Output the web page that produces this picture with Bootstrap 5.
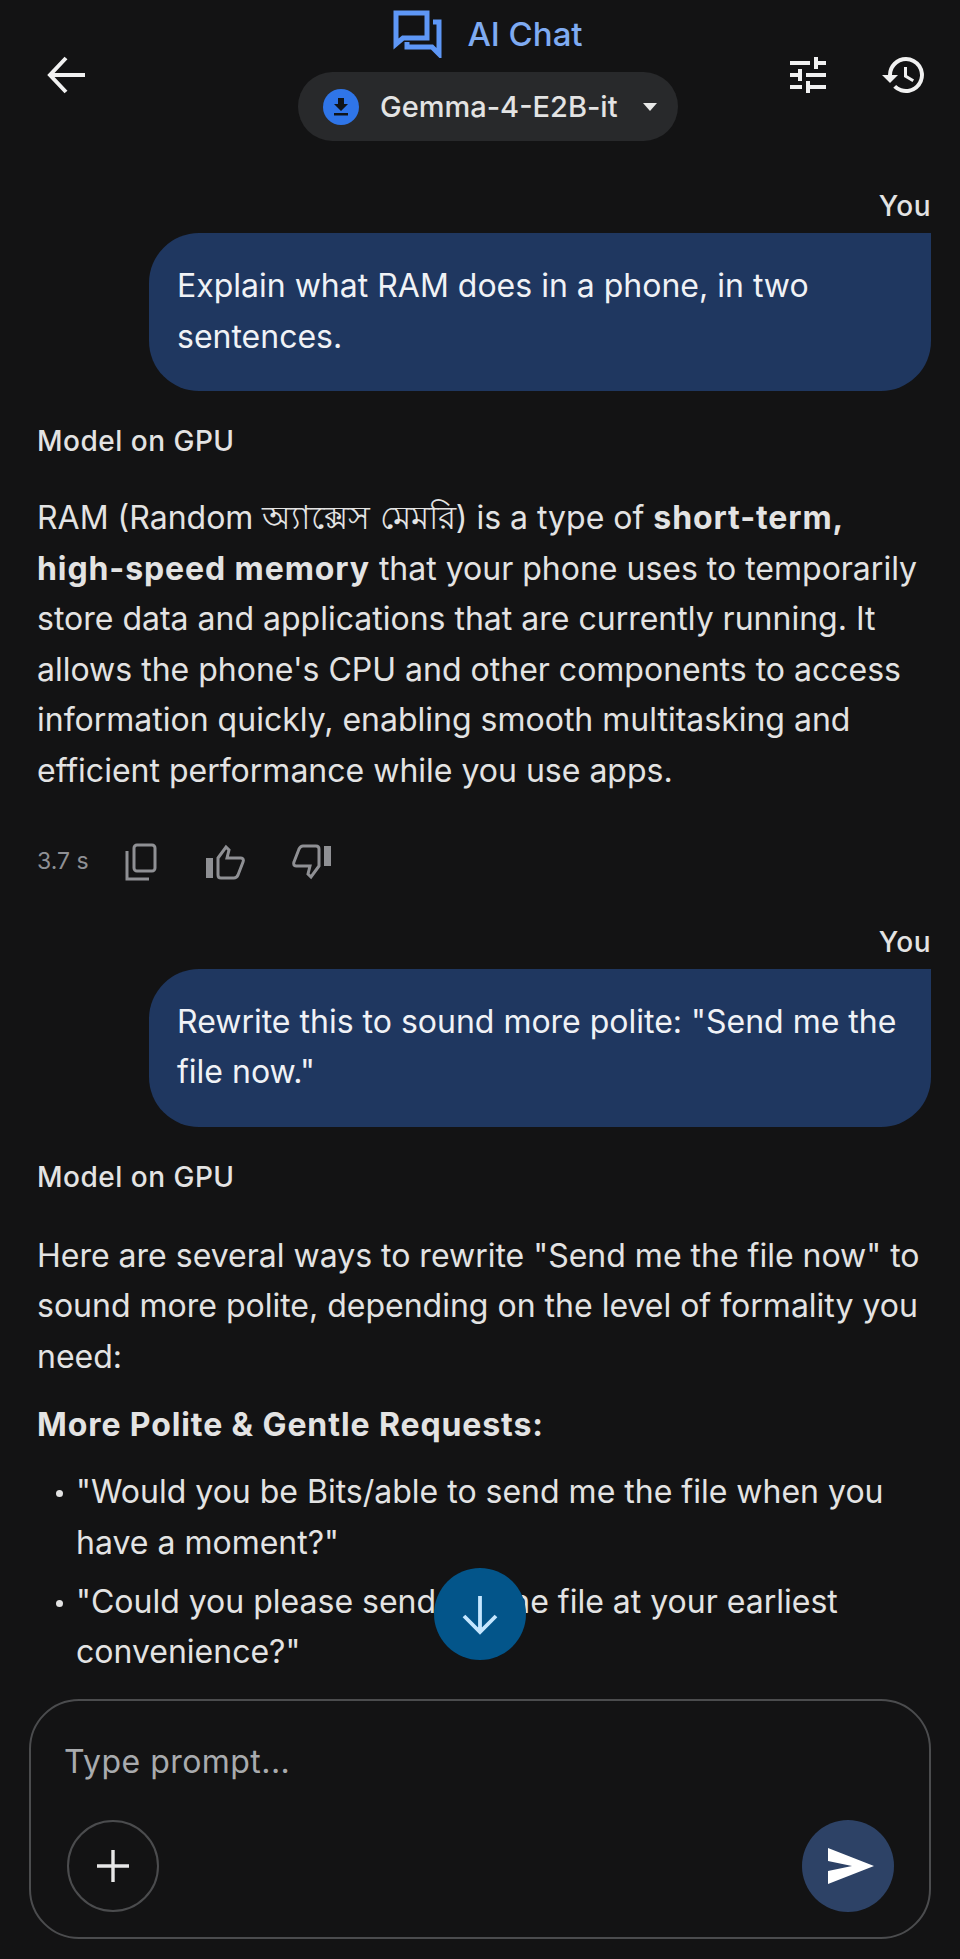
<!doctype html>
<html lang="en">
  <head>
    <meta charset="UTF-8" />
    <meta name="viewport" content="width=device-width, initial-scale=1.0" />
    <title>AI Chat</title>
    <link
      rel="stylesheet"
      href="https://cdn.jsdelivr.net/npm/bootstrap@5.3.0/dist/css/bootstrap.min.css"
    />
    <style>
      html, body { height: 1959px; overflow: hidden; }
      body {
        background: #131314;
        color: #e3e3e3;
        font-family: Inter, Roboto, "Noto Sans", sans-serif;
        font-size: 32px;
        line-height: 50.6px;
      }
      .app-shell { height: 1959px; width: 960px; }
      .top-bar { height: 153px; padding: 51px 32px 0 46px; }
      .top-actions { gap: 48px; }
      .top-center { top: 9px; left: 8px; width: 960px; }
      .app-title { color: #7fabf2; font-size: 33px; line-height: 50px; font-weight: 500; gap: 24px; }
      .model-chip {
        background: #28292b; height: 69px; width: 380px; border-radius: 35px;
        font-size: 29px; font-weight: 500; line-height: 1; padding: 0 20px 0 25px;
        margin-top: 13px;
      }
      .dl-dot { width: 36px; height: 36px; border-radius: 50%; background: #2f75e8; }
      .chip-label { margin-left: 21px; }
      .top-icon { width: 48px; height: 48px; }
      .back-icon { width: 40px; height: 48px; }
      .chat-scroll { height: 1546px; overflow: hidden; padding: 33px 29px 0 37px; }
      .who { font-size: 28px; font-weight: 500; line-height: 40px; letter-spacing: .5px; }
      .user-bubble {
        background: #1f3760; width: 782px; min-height: 158px;
        border-radius: 50px 0 50px 50px; padding: 28px 28px 26px;
        margin: 7px 0 30px auto; color: #f0f2f6;
      }
      .model-text { margin: 32px 0 0; }
      .model-text b, .sub-head { letter-spacing: .9px; }
      .model-text b { font-weight: 700; }
      .bn-text { font-size: 33.2px; line-height: 1; }
      .stat-row { height: 50px; margin: 40px 0 35px; color: #8f9094; font-size: 23px; }
      .stat-row svg { display: block; }
      .stat-copy { margin-left: 36px; }
      .stat-up { margin-left: 49px; }
      .stat-down { margin-left: 45px; }
      .later-answer { margin-top: 34px; }
      .sub-head { font-weight: 700; margin: 18px 0 0; line-height: 50px; }
      .bullets { list-style: none; margin: 17px 0 0; padding: 0 0 0 39px; }
      .bullets li { position: relative; margin-bottom: 8px; }
      .bullets li::before {
        content: ""; position: absolute; left: -20px; top: 23px;
        width: 7px; height: 7px; border-radius: 50%; background: #e3e3e3;
      }
      .scroll-fab {
        left: 434px; top: 1568px; width: 92px; height: 92px; border-radius: 50%;
        background: #03558a;
      }
      .prompt-box {
        height: 240px; margin: 0 29px; border: 2.5px solid #4b4c4e; border-radius: 50px;
        padding: 0 35px 25px 33px;
      }
      .prompt-text { color: #a9abae; line-height: 50px; padding-top: 36px; letter-spacing: .45px; }
      .round-btn { width: 92px; height: 92px; border-radius: 50%; }
      .plus-btn { border: 2px solid #4b4c4e; margin-left: 3px; }
      .send-btn { background: #2d4266; padding-left: 6px; }
    </style>
  </head>
  <body>
    <div class="app-shell position-relative d-flex flex-column">
      <!-- Header -->
      <header class="top-bar d-flex align-items-start justify-content-between position-relative">
        <svg class="back-icon" viewBox="0 0 40 48" fill="none" stroke="#f1f1f1" stroke-width="4">
          <path d="M39 24H5M20 7 4 24l16 17" />
        </svg>
        <div class="top-actions d-flex">
          <svg class="top-icon" viewBox="0 0 24 24" fill="#f1f1f1">
            <path d="M3 17v2h6v-2H3zM3 5v2h10V5H3zm10 16v-2h8v-2h-8v-2h-2v6h2zM7 9v2H3v2h4v2h2V9H7zm14 4v-2H11v2h10zm-6-4h2V7h4V5h-4V3h-2v6z" />
          </svg>
          <svg class="top-icon" viewBox="0 0 24 24" fill="#f1f1f1">
            <path d="M13 3a9 9 0 0 0-9 9H1l3.9 3.9.1.1 4-4H6a7 7 0 1 1 2.05 4.95l-1.42 1.42A9 9 0 1 0 13 3zm-1 5v5l4.25 2.52.77-1.28-3.52-2.09V8H12z" />
          </svg>
        </div>
        <div class="top-center position-absolute d-flex flex-column align-items-center">
          <div class="d-flex align-items-center app-title">
            <svg width="50" height="48" viewBox="0 0 50 48" fill="none" stroke="#5e97f6" stroke-width="5">
              <path d="M3 3h31v25H10l-7 6V3z" />
              <path d="M40 12h6v32l-7-7H14v-5" />
            </svg>
            <span>AI Chat</span>
          </div>
          <div class="model-chip d-flex align-items-center">
            <span class="dl-dot d-flex align-items-center justify-content-center">
              <svg width="24" height="24" viewBox="0 0 24 24" fill="#101418"><path d="M19 9h-4V3H9v6H5l7 7 7-7zM5 18v2.4h14V18H5z" /></svg>
            </span>
            <span class="chip-label flex-grow-1">Gemma-4-E2B-it</span>
            <svg width="16" height="16" viewBox="0 0 16 16" fill="#e8e8e8"><path d="M1 4h14L8 12z" /></svg>
          </div>
        </div>
      </header>

      <!-- Messages -->
      <main class="chat-scroll">
        <div class="who text-end">You</div>
        <div class="user-bubble">Explain what RAM does in a phone, in two sentences.</div>
        <div class="who">Model on GPU</div>
        <p class="model-text">RAM (Random <span class="bn-text">অ্যাক্সেস মেমরি</span>) is a type of <b>short-term,</b><br /><b>high-speed memory</b> that your phone uses to temporarily store data and applications that are currently running. It allows the phone's CPU and other components to access information quickly, enabling smooth multitasking and efficient performance while you use apps.</p>
        <div class="stat-row d-flex align-items-center">
          <span>3.7 s</span>
          <svg class="stat-copy" width="32" height="38" viewBox="0 0 32 38" fill="none" stroke="#8f9094" stroke-width="3"><rect x="9" y="2" width="21" height="26" rx="3" /><path d="M2 8v28h22" /></svg>
          <svg class="stat-up" width="40" height="36" viewBox="0 0 40 36" fill="none" stroke="#8f9094" stroke-width="3"><path d="M0 14h7v20H0z" fill="#8f9094" stroke="none" /><path d="M12 14l8-11 3 3-2 8h14c2 0 3 2 2 4l-5 13c-1 2-2 3-4 3H15c-2 0-3-1-3-3V14z" /></svg>
          <svg class="stat-down" width="40" height="36" viewBox="0 0 40 36" fill="none" stroke="#8f9094" stroke-width="3"><path d="M33 2h7v20h-7z" fill="#8f9094" stroke="none" /><path d="M28 22l-8 11-3-3 2-8H5c-2 0-3-2-2-4L8 5c1-2 2-3 4-3h13c2 0 3 1 3 3v17z" /></svg>
        </div>
        <div class="who text-end">You</div>
        <div class="user-bubble">Rewrite this to sound more polite: "Send me the file now."</div>
        <div class="who">Model on GPU</div>
        <p class="model-text later-answer">Here are several ways to rewrite "Send me the file now" to sound more polite, depending on the level of formality you need:</p>
        <p class="sub-head">More Polite &amp; Gentle Requests:</p>
        <ul class="bullets">
          <li>"Would you be Bits/able to send me the file when you have a moment?"</li>
          <li>"Could you please send me the file at your earliest convenience?"</li>
        </ul>
      </main>

      <!-- Scroll to bottom -->
      <div class="scroll-fab position-absolute d-flex align-items-center justify-content-center">
        <svg width="44" height="44" viewBox="0 0 44 44" fill="none" stroke="#c5e7ff" stroke-width="3.8"><path d="M22 4v34M6 24l16 16 16-16" /></svg>
      </div>

      <!-- Prompt input -->
      <div class="prompt-box d-flex flex-column justify-content-between">
        <div class="prompt-text">Type prompt...</div>
        <div class="d-flex justify-content-between align-items-center">
          <div class="round-btn plus-btn d-flex align-items-center justify-content-center">
            <svg width="36" height="36" viewBox="0 0 36 36" fill="none" stroke="#e8e8e8" stroke-width="3.4"><path d="M18 2v32M2 18h32" /></svg>
          </div>
          <div class="round-btn send-btn d-flex align-items-center justify-content-center">
            <svg width="48" height="36" viewBox="0 0 48 36" fill="#fff"><path d="M1 0l46 18L1 36V23l24-5L1 13z" /></svg>
          </div>
        </div>
      </div>
    </div>
    <script src="https://cdn.jsdelivr.net/npm/bootstrap@5.3.0/dist/js/bootstrap.bundle.min.js"></script>
  </body>
</html>
